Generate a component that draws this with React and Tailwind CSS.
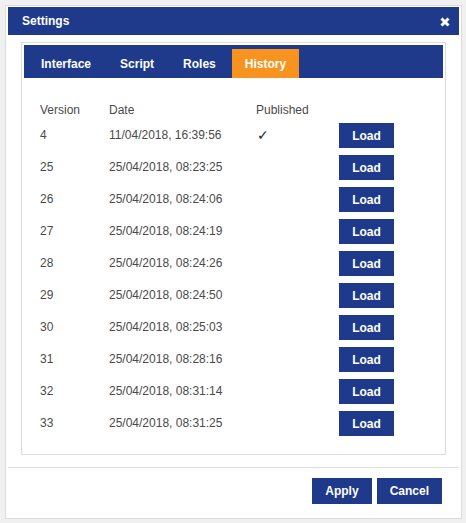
import React from "react";

const BLUE = "bg-[#1f398b]";

const rows = [
  ["4", "11/04/2018, 16:39:56", true],
  ["25", "25/04/2018, 08:23:25", false],
  ["26", "25/04/2018, 08:24:06", false],
  ["27", "25/04/2018, 08:24:19", false],
  ["28", "25/04/2018, 08:24:26", false],
  ["29", "25/04/2018, 08:24:50", false],
  ["30", "25/04/2018, 08:25:03", false],
  ["31", "25/04/2018, 08:28:16", false],
  ["32", "25/04/2018, 08:31:14", false],
  ["33", "25/04/2018, 08:31:25", false],
];

export default function App() {
  return (
    <div
      className="h-[523px] w-[466px] bg-[#f0f0f0] pt-[5px] pl-[5px]"
      style={{ fontFamily: '"Liberation Sans", Arial, sans-serif' }}
    >
      <div className="flex h-[514px] w-[457px] flex-col border border-[#dcdcdc] bg-white px-[2px] pt-[1px]">
        {/* Header */}
        <div className={`flex h-[28px] items-center justify-between ${BLUE} pl-[14px] pr-[9px]`}>
          <span className="text-[12px] font-bold text-white">Settings</span>
          <svg width="10" height="10" viewBox="0 0 10 10" className="mt-[1px]">
            <path d="M1.5 1.5 L8.5 8.5 M8.5 1.5 L1.5 8.5" stroke="#fff" strokeWidth="3" strokeLinecap="butt" />
          </svg>
        </div>

        {/* Panel */}
        <div className="mt-[7px] ml-[13px] w-[425px] border border-[#dcdcdc] p-[2px]">
          <div className={`flex h-[33px] items-end gap-[3px] ${BLUE} pl-[4px]`}>
            {["Interface", "Script", "Roles", "History"].map((t) => (
              <div
                key={t}
                className={`flex h-[29px] items-center px-[13px] text-[12px] font-bold text-white ${
                  t === "History" ? "bg-[#f7931e]" : ""
                }`}
              >
                {t}
              </div>
            ))}
          </div>

          <div className="pt-[22px] pb-[12px] pl-[16px] text-[12px] text-[#4a4a4a]">
            <div className="grid h-[20px] grid-cols-[69px_147px_83px_55px] items-center">
              <span>Version</span>
              <span>Date</span>
              <span>Published</span>
              <span></span>
            </div>
            {rows.map(([v, d, p]) => (
              <div key={v} className="grid h-[32px] grid-cols-[69px_147px_83px_55px] items-start">
                <span className="mt-[3px] leading-[25px]">{v}</span>
                <span className="mt-[3px] leading-[25px]">{d}</span>
                <span className="mt-[3px] pl-[1px] text-[14px] leading-[25px] text-[#222]">{p ? "✓" : ""}</span>
                <button
                  className={`mt-[3px] flex h-[25px] w-[55px] items-center justify-center ${BLUE} text-[12px] font-bold text-white`}
                >
                  Load
                </button>
              </div>
            ))}
          </div>
        </div>

        {/* Separator */}
        <div className="mt-[12px] h-px bg-[#dcdcdc]" />

        {/* Footer */}
        <div className="flex justify-end gap-[5px] pt-[10px] pr-[17px]">
          <button className={`flex h-[26px] items-center ${BLUE} px-[13px] text-[12px] font-bold text-white`}>
            Apply
          </button>
          <button className={`flex h-[26px] items-center ${BLUE} px-[13px] text-[12px] font-bold text-white`}>
            Cancel
          </button>
        </div>
      </div>
    </div>
  );
}
